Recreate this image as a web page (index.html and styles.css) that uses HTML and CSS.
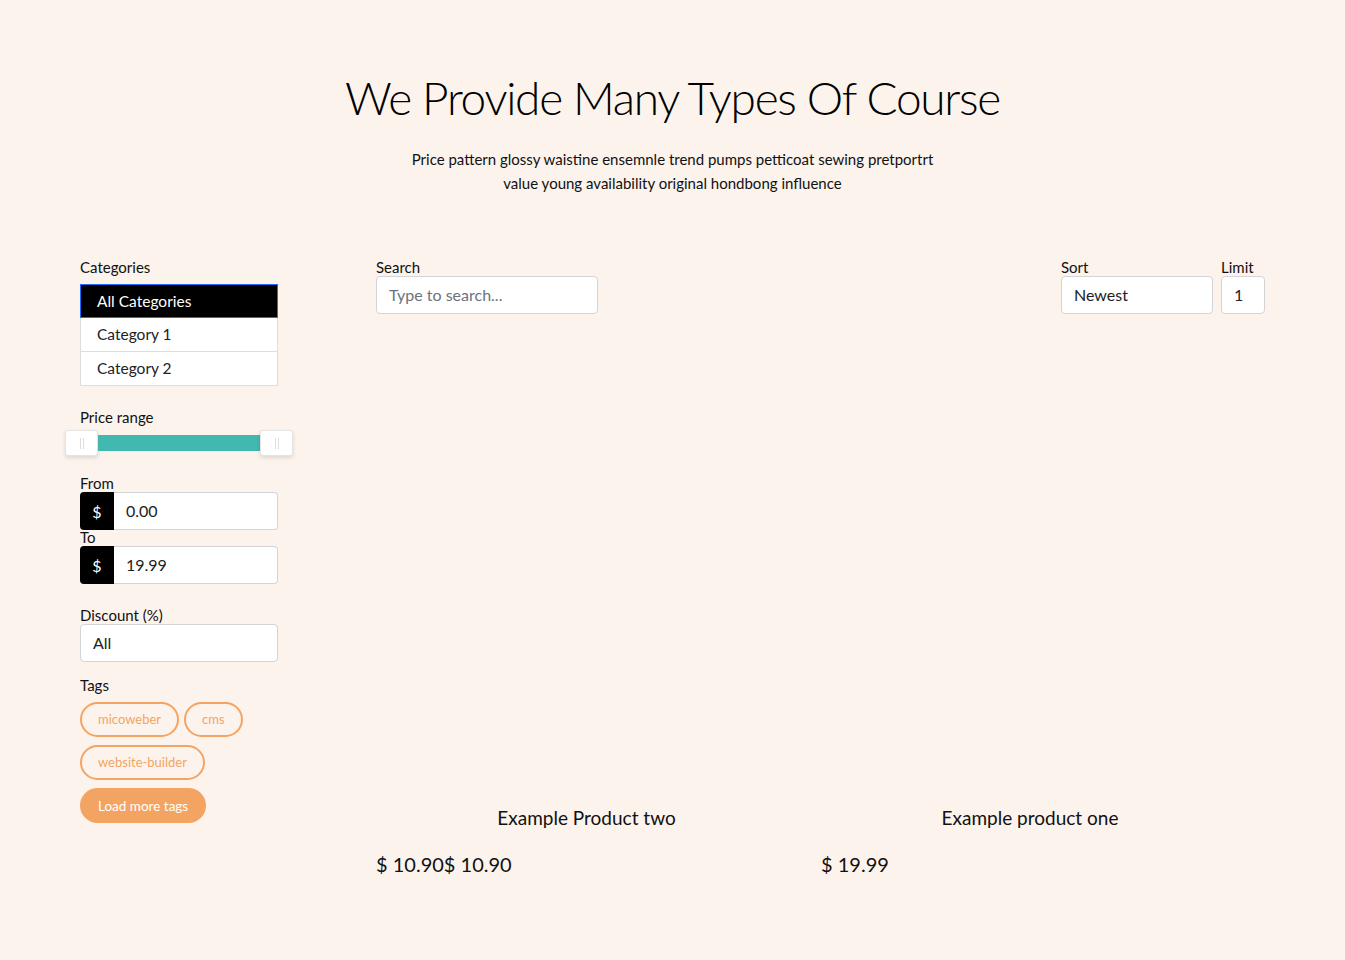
FILE: index.html
```html
<!DOCTYPE html>
<html lang="en">
<head>
<meta charset="utf-8">
<title>Courses</title>
<link rel="stylesheet" href="styles.css">
</head>
<body>
<div class="page">
  <header class="hero">
    <h1 class="hero-title">We Provide Many Types Of Course</h1>
    <p class="hero-sub">Price pattern glossy waistine ensemnle trend pumps petticoat sewing pretportrt<br>value young availability original hondbong influence</p>
  </header>

  <div class="shop">
    <aside class="sidebar">
      <div class="field">
        <div class="label">Categories</div>
        <ul class="cat-list">
          <li class="cat-item active">All Categories</li>
          <li class="cat-item">Category 1</li>
          <li class="cat-item">Category 2</li>
        </ul>
      </div>

      <div class="field price-field">
        <div class="label">Price range</div>
        <div class="slider">
          <span class="handle handle-left"><i></i></span>
          <span class="track"></span>
          <span class="handle handle-right"><i></i></span>
        </div>
      </div>

      <div class="field from-field">
        <div class="label">From</div>
        <div class="input-group"><span class="addon">$</span><span class="group-input">0.00</span></div>
        <div class="label label-to">To</div>
        <div class="input-group"><span class="addon">$</span><span class="group-input">19.99</span></div>
      </div>

      <div class="field discount-field">
        <div class="label">Discount (%)</div>
        <div class="box">All</div>
      </div>

      <div class="field tags-field">
        <div class="label">Tags</div>
        <div class="tags">
          <span class="tag">micoweber</span>
          <span class="tag">cms</span>
          <span class="tag">website-builder</span>
        </div>
        <button class="load-more">Load more tags</button>
      </div>
    </aside>

    <main class="main">
      <div class="toolbar">
        <div class="search">
          <div class="label">Search</div>
          <div class="box box-search placeholder">Type to search...</div>
        </div>
        <div class="sort">
          <div class="label">Sort</div>
          <div class="box box-sort">Newest</div>
        </div>
        <div class="limit">
          <div class="label">Limit</div>
          <div class="box box-limit">1</div>
        </div>
      </div>

      <div class="products">
        <div class="product">
          <div class="product-img"></div>
          <div class="product-title">Example Product two</div>
          <div class="product-price">$ 10.90$ 10.90</div>
        </div>
        <div class="product">
          <div class="product-img"></div>
          <div class="product-title">Example product one</div>
          <div class="product-price">$ 19.99</div>
        </div>
      </div>
    </main>
  </div>
</div>
</body>
</html>
```

FILE: styles.css
```css
* { box-sizing: border-box; }
html, body { margin: 0; padding: 0; }
body {
  background: #fcf3ed;
  font-family: "Lato", "Noto Sans", sans-serif;
  color: #111;
}
.page { padding: 0 80px; }

.hero { text-align: center; padding-top: 69px; }
.hero-title {
  margin: 0;
  font-size: 46px;
  font-weight: 300;
  line-height: 58px;
  letter-spacing: -1.3px;
  color: #000;
}
.hero-sub {
  margin: 20px 0 0;
  font-size: 15px;
  line-height: 24px;
  color: #111;
}

.shop { display: flex; margin-top: 63px; gap: 98px; }
.sidebar { width: 198px; flex: none; }
.main { flex: 1; }

.label { font-size: 15px; line-height: 18px; color: #111; }

.cat-list { list-style: none; margin: 8px 0 0; padding: 0; }
.cat-item {
  height: 34px;
  line-height: 32px;
  padding-left: 16px;
  font-size: 15.5px;
  background: #fff;
  border: 1px solid #dedede;
  border-top-width: 0;
  color: #222;
}
.cat-item.active {
  background: #000;
  color: #fff;
  border: 1px solid #1a6dff;
}

.price-field { margin-top: 22px; }
.slider { display: flex; align-items: center; height: 28px; margin: 3px -15px 0 -15px; }
.track { flex: 1; height: 16px; background: #42b8ae; }
.handle {
  width: 33px; height: 26px; background: #fff;
  border: 1px solid #e4e4e4; border-radius: 3px;
  box-shadow: 0 2px 4px rgba(0,0,0,0.12);
  display: flex; align-items: center; justify-content: center;
}
.handle i {
  width: 4px; height: 11px;
  border-left: 1px solid #ddd; border-right: 1px solid #ddd;
}

.from-field { margin-top: 17px; }
.input-group { display: flex; height: 38px; }
.addon {
  width: 34px; background: #000; color: #fff;
  border-radius: 4px 0 0 4px;
  display: flex; align-items: center; justify-content: center;
  font-size: 16px;
}
.group-input {
  flex: 1; background: #fff; border: 1px solid #d2d4d8; border-left: 0;
  border-radius: 0 4px 4px 0;
  padding-left: 12px; line-height: 36px; font-size: 16px; color: #222;
}
.label-to { margin-top: -1px; line-height: 17px; }

.discount-field { margin-top: 22px; }
.box {
  height: 38px; background: #fff; border: 1px solid #d2d4d8; border-radius: 4px;
  padding-left: 12px; line-height: 36px; font-size: 16px; color: #222;
}

.tags-field { margin-top: 14px; }
.tags { display: flex; flex-wrap: wrap; gap: 8px 5px; margin-top: 8px; width: 198px; }
.tag {
  height: 35px; padding: 0 16px; border: 2px solid #f4a462; border-radius: 18px;
  color: #f4a462; font-size: 13px; line-height: 31px;
}
.load-more {
  display: block; margin-top: 8px; height: 35px; padding: 0 18px;
  border: 0; border-radius: 18px; background: #f4a462; color: #fff;
  font-family: inherit; font-size: 13.5px;
}

.toolbar { display: flex; align-items: flex-start; }
.search { width: 222px; }
.sort { margin-left: auto; width: 152px; }
.limit { margin-left: 8px; width: 44px; }
.placeholder { color: #6c737c; }

.products {
  display: grid;
  grid-template-columns: 421px 418px;
  column-gap: 24px;
  margin-top: 16px;
}
.product-img { height: 476px; }
.product-title { text-align: center; font-size: 19px; line-height: 24px; color: #111; }
.product-price { margin-top: 22px; font-size: 20px; line-height: 24px; color: #111; }
```
